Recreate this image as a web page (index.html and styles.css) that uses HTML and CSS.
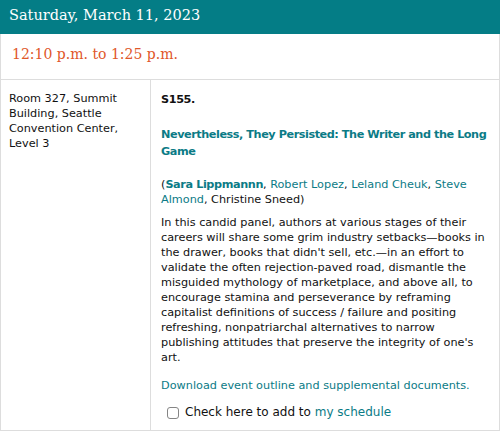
FILE: index.html
```html
<!DOCTYPE html>
<html>
<head>
<meta charset="utf-8">
<link rel="stylesheet" href="styles.css">
</head>
<body>
<div class="event">
  <div class="day">Saturday, March 11, 2023</div>
  <div class="time">12:10 p.m. to 1:25 p.m.</div>
  <div class="row">
    <div class="place">Room 327, Summit Building, Seattle Convention Center, Level 3</div>
    <div class="detail">
      <p class="code">S155.</p>
      <p class="title"><a href="#">Nevertheless, They Persisted: The Writer and the Long Game</a></p>
      <p class="people">(<a href="#" class="lead">Sara Lippmannn</a>, <a href="#">Robert Lopez</a>, <a href="#">Leland Cheuk</a>, <a href="#">Steve Almond</a>, Christine Sneed)</p>
      <p class="desc">In this candid panel, authors at various stages of their careers will share some grim industry setbacks—books in the drawer, books that didn't sell, etc.—in an effort to validate the often rejection-paved road, dismantle the misguided mythology of marketplace, and above all, to encourage stamina and perseverance by reframing capitalist definitions of success / failure and positing refreshing, nonpatriarchal alternatives to narrow publishing attitudes that preserve the integrity of one's art.</p>
      <p class="download"><a href="#">Download event outline and supplemental documents.</a></p>
      <label class="check"><span class="box"></span><span>Check here to add to <a href="#">my schedule</a></span></label>
    </div>
  </div>
</div>
</body>
</html>
```
FILE: styles.css
```css
html, body {
  margin: 0;
  padding: 0;
  background: #ffffff;
}
.event {
  width: 498px;
  border-left: 1px solid #dddddd;
  border-right: 1px solid #dddddd;
  border-bottom: 1px solid #dddddd;
  font-family: "DejaVu Sans", sans-serif;
}
.day {
  height: 34px;
  box-sizing: border-box;
  margin-left: -1px;
  margin-right: -1px;
  background: #047d86;
  color: #ffffff;
  font-family: "DejaVu Serif", serif;
  font-size: 14.5px;
  line-height: 30px;
  padding-left: 9px;
}
.time {
  height: 46px;
  box-sizing: border-box;
  border-bottom: 1px solid #dddddd;
  color: #e0572a;
  font-family: "DejaVu Serif", serif;
  font-size: 14px;
  line-height: 40px;
  padding-left: 11px;
}
.row {
  display: flex;
}
.place {
  width: 150px;
  box-sizing: border-box;
  border-right: 1px solid #dddddd;
  padding: 11px 8px 0 8px;
  font-size: 11.25px;
  line-height: 15px;
  color: #111111;
}
.detail {
  flex: 1;
  padding: 12px 6px 10px 10px;
  font-size: 11.25px;
  line-height: 15px;
  color: #111111;
}
.detail p {
  margin: 0;
}
a {
  color: #0b7b86;
  text-decoration: none;
}
.code {
  font-weight: bold;
  letter-spacing: -0.4px;
  margin-bottom: 19px !important;
}
.title {
  font-weight: bold;
  line-height: 17px;
  letter-spacing: -0.45px;
  margin-bottom: 17px !important;
}
.lead {
  font-weight: bold;
  letter-spacing: -0.4px;
}
.people {
  margin-bottom: 8px !important;
}
.desc {
  margin-bottom: 13px !important;
}
.check {
  display: flex;
  align-items: center;
  margin-top: 12px;
  padding-left: 6px;
  font-size: 12px;
  line-height: 15px;
}
.box {
  width: 10px;
  height: 10px;
  border: 1px solid #858585;
  border-radius: 3px;
  margin-right: 6px;
}
```
